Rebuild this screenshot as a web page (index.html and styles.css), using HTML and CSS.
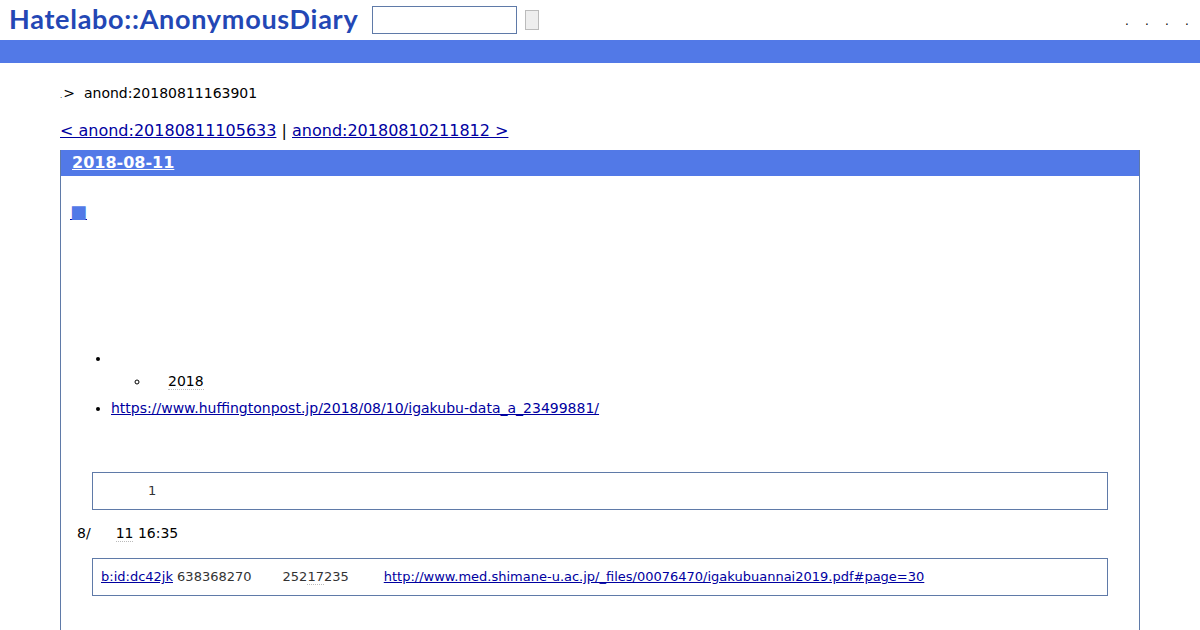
FILE: index.html
```html
<!DOCTYPE html>
<html lang="en">
<head>
    <meta charset="UTF-8">
    <title>anond:20180811163901</title>
    <link rel="stylesheet" href="styles.css">
</head>
<body>
    <div class="header">
        <a class="logo">Hatelabo::AnonymousDiary</a>
        <form class="search">
            <input class="search-input" type="text">
            <button class="search-button" type="button"></button>
        </form>
        <ul class="header-links">
            <li>.</li>
            <li>.</li>
            <li>.</li>
            <li>.</li>
        </ul>
    </div>
    <div class="blue-bar"></div>
    <div class="main">
        <p class="breadcrumb"><span class="tiny-dot">.</span><span class="crumb-arrow">&gt;</span>anond:20180811163901</p>
        <p class="pager"><a href="#">&lt; anond:20180811105633</a> | <a href="#">anond:20180810211812 &gt;</a></p>
        <div class="day">
            <h2 class="day-title"><a href="#">2018-08-11</a></h2>
            <div class="day-body">
                <h3 class="entry-title"><a href="#"><span class="square">■</span></a></h3>
                <ul class="entry-list">
                    <li>
                        <div>&nbsp;</div>
                        <ul class="sub-list">
                            <li><span class="dotted year">2018</span></li>
                        </ul>
                    </li>
                    <li><a href="#">https://www.huffingtonpost.jp/2018/08/10/igakubu-data_a_23499881/</a></li>
                </ul>
                <div class="note-box note-first"><span class="count">1</span></div>
                <p class="timestamp">8/<span class="dotted date-day">11</span> 16:35</p>
                <div class="note-box">
                    <a href="#">b:id:dc42jk</a> 638368270<span class="num-second">252<span class="dotted">17</span>235</span><a class="note-link" href="#">http://www.med.shimane-u.ac.jp/_files/00076470/igakubuannai2019.pdf#page=30</a>
                </div>
            </div>
        </div>
    </div>
</body>
</html>
```

FILE: styles.css
```css
html, body {
    height: 630px;
    overflow: hidden;
}

body {
    margin: 0;
    padding: 0;
    background-color: #ffffff;
    color: #000000;
    font-family: 'DejaVu Sans', sans-serif;
    font-size: 14px;
}

a {
    color: #0000a0;
}

.header {
    height: 40px;
    display: flex;
    align-items: center;
    padding: 0 0 0 9px;
    box-sizing: border-box;
}

.logo {
    width: 363px;
    margin-bottom: 3px;
    font-family: 'Lato', sans-serif;
    font-size: 27px;
    font-weight: bold;
    letter-spacing: 0.72px;
    color: #2347b5;
    white-space: nowrap;
}

.search {
    display: flex;
    align-items: center;
    gap: 8px;
}

.search-input {
    width: 145px;
    height: 28px;
    box-sizing: border-box;
    border: 1px solid #5f7aa8;
    padding: 0;
    margin: 0;
}

.search-button {
    width: 14px;
    height: 20px;
    box-sizing: border-box;
    background: #eeeeee;
    border: 1px solid #bbbbbb;
    padding: 0;
}

.header-links {
    list-style: none;
    display: flex;
    gap: 16px;
    margin: 0 0 0 auto;
    padding: 2px 11px 0 0;
    font-size: 12px;
    color: #000000;
}

.header-links li {
    width: 4px;
    text-align: center;
}

.blue-bar {
    height: 23px;
    background: #5279e7;
}

.main {
    padding: 0 60px;
}

.breadcrumb {
    margin: 21px 0 0;
    line-height: 18px;
}

.tiny-dot {
    font-size: 7px;
}

.crumb-arrow {
    margin: 0 9px 0 1px;
}

.pager {
    margin: 16px 0 0;
    font-size: 16px;
    line-height: 20px;
}

.day {
    margin-top: 9px;
    border-left: 1px solid #5f7aa8;
    border-right: 1px solid #5f7aa8;
    height: 480px;
}

.day-title {
    margin: 0;
    height: 26px;
    padding: 0 11px;
    background: #5279e7;
    font-size: 16px;
    line-height: 26px;
}

.day-title a {
    color: #ffffff;
}

.day-body {
    padding: 0 31px;
}

.entry-title {
    margin: 26px 0 0 -22px;
    height: 20px;
    line-height: 20px;
    font-size: 18px;
    font-weight: normal;
}

.square {
    color: #5279e7;
}

.entry-list {
    margin: 127px 0 0;
    padding: 0 0 0 19px;
    line-height: 18px;
}

.entry-list > li {
    margin-bottom: 9px;
}

.sub-list {
    list-style: circle;
    margin: 5px 0 0;
    padding: 0 0 0 39px;
}

.year {
    margin-left: 18px;
}

.dotted {
    border-bottom: 1px dotted #bbbbbb;
}

.note-box {
    height: 38px;
    box-sizing: border-box;
    border: 1px solid #5f7aa8;
    padding: 0 8px;
    font-size: 13px;
    line-height: 35px;
    color: #333333;
    white-space: nowrap;
}

.note-first {
    margin-top: 55px;
}

.count {
    margin-left: 47px;
}

.timestamp {
    margin: 14px 0 16px -15px;
    line-height: 18px;
}

.date-day {
    margin-left: 25px;
}

.num-second {
    margin-left: 31px;
}

.note-link {
    margin-left: 35px;
}
```
